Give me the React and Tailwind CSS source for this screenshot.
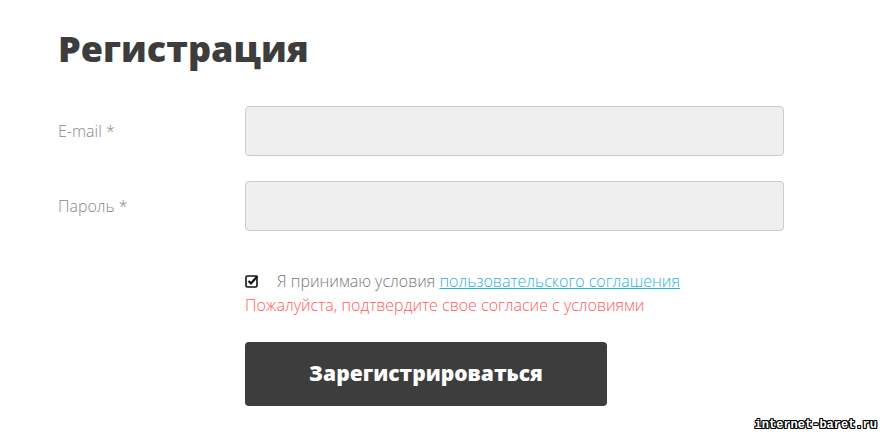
import React from "react";

const App = () => {
	return (
		<div className="relative w-[884px] h-[436px] bg-white overflow-hidden font-['Open_Sans',sans-serif]">
			<div className="pl-[58px] pt-[25px]">
				<h1 className="text-[36px] leading-[48px] font-extrabold text-[#3d3d3d]">Регистрация</h1>

				<div className="mt-[33px] flex items-center">
					<label className="w-[187px] text-[16px] font-light text-[#888]">E-mail *</label>
					<input className="w-[539px] h-[50px] bg-[#efefef] border border-[#cccccc] rounded-[4px]" />
				</div>
				<div className="mt-[25px] flex items-center">
					<label className="w-[187px] text-[16px] font-light text-[#888]">Пароль *</label>
					<input type="password" className="w-[539px] h-[50px] bg-[#efefef] border border-[#cccccc] rounded-[4px]" />
				</div>

				<div className="ml-[187px] mt-[38px]">
					<div className="flex items-center h-[24px]">
						<svg width="14" height="14" viewBox="0 0 14 14" className="mr-[18px]">
							<rect x="1" y="2" width="11" height="11" rx="1.5" fill="none" stroke="#111" strokeWidth="1.6" />
							<path d="M3.5 7 L6 9.5 L12.5 2" fill="none" stroke="#111" strokeWidth="2.2" />
						</svg>
						<span className="text-[16px] font-light text-[#777]">
							Я принимаю условия{" "}
							<a href="#" className="text-[#2cb1e0] underline">пользовательского соглашения</a>
						</span>
					</div>
					<div className="text-[16px] font-light text-[#ff5a5a] leading-[24px]">
						Пожалуйста, подтвердите свое согласие с условиями
					</div>
					<button className="mt-[25px] w-[362px] h-[64px] bg-[#3d3d3d] rounded-[4px] text-white text-[21px] font-extrabold">
						Зарегистрироваться
					</button>
				</div>
			</div>

			<div className="absolute right-[7px] bottom-[2px] font-['Liberation_Mono',monospace] font-bold text-[12px] text-white [text-shadow:1px_1px_0_#000,-1px_-1px_0_#000,1px_-1px_0_#000,-1px_1px_0_#000,0_1px_0_#000,0_-1px_0_#000,1px_0_0_#000,-1px_0_0_#000]">
				internet-baret.ru
			</div>
		</div>
	);
};

export default App;
